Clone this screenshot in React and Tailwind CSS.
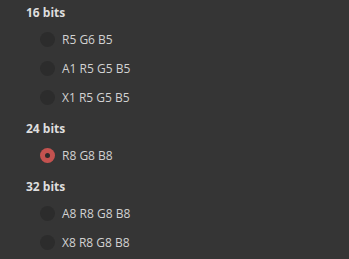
import React from 'react'

const GROUPS = [
  { title: '16 bits', options: ['R5 G6 B5', 'A1 R5 G5 B5', 'X1 R5 G5 B5'] },
  { title: '24 bits', options: ['R8 G8 B8'] },
  { title: '32 bits', options: ['A8 R8 G8 B8', 'X8 R8 G8 B8'] },
]

function Radio({ checked, label }) {
  return (
    <div className="flex h-[29px] items-center pl-[40px]">
      {checked ? (
        <span className="flex h-[15px] w-[15px] items-center justify-center rounded-full bg-[#c4524f]">
          <span className="h-[5px] w-[5px] rounded-full bg-[#2e2a2a]" />
        </span>
      ) : (
        <span className="h-[15px] w-[15px] rounded-full bg-[#2c2c2c]" />
      )}
      <span className="ml-[7px] text-[12px] leading-5 text-[#d2d2d2]">{label}</span>
    </div>
  )
}

export default function App() {
  const selected = 'R8 G8 B8'
  return (
    <div
      className="flex h-[259px] w-[349px] flex-col gap-[7px] bg-[#353535] pt-[3px]"
      style={{ fontFamily: '"Open Sans", sans-serif' }}
    >
      {GROUPS.map(g => (
        <div key={g.title} className="flex flex-col">
          <div className="h-5 pl-[26px] text-[12px] font-bold leading-5 text-[#dedede]">{g.title}</div>
          <div className="mt-[2px] flex flex-col">
            {g.options.map(o => (
              <Radio key={o} label={o} checked={o === selected} />
            ))}
          </div>
        </div>
      ))}
    </div>
  )
}
